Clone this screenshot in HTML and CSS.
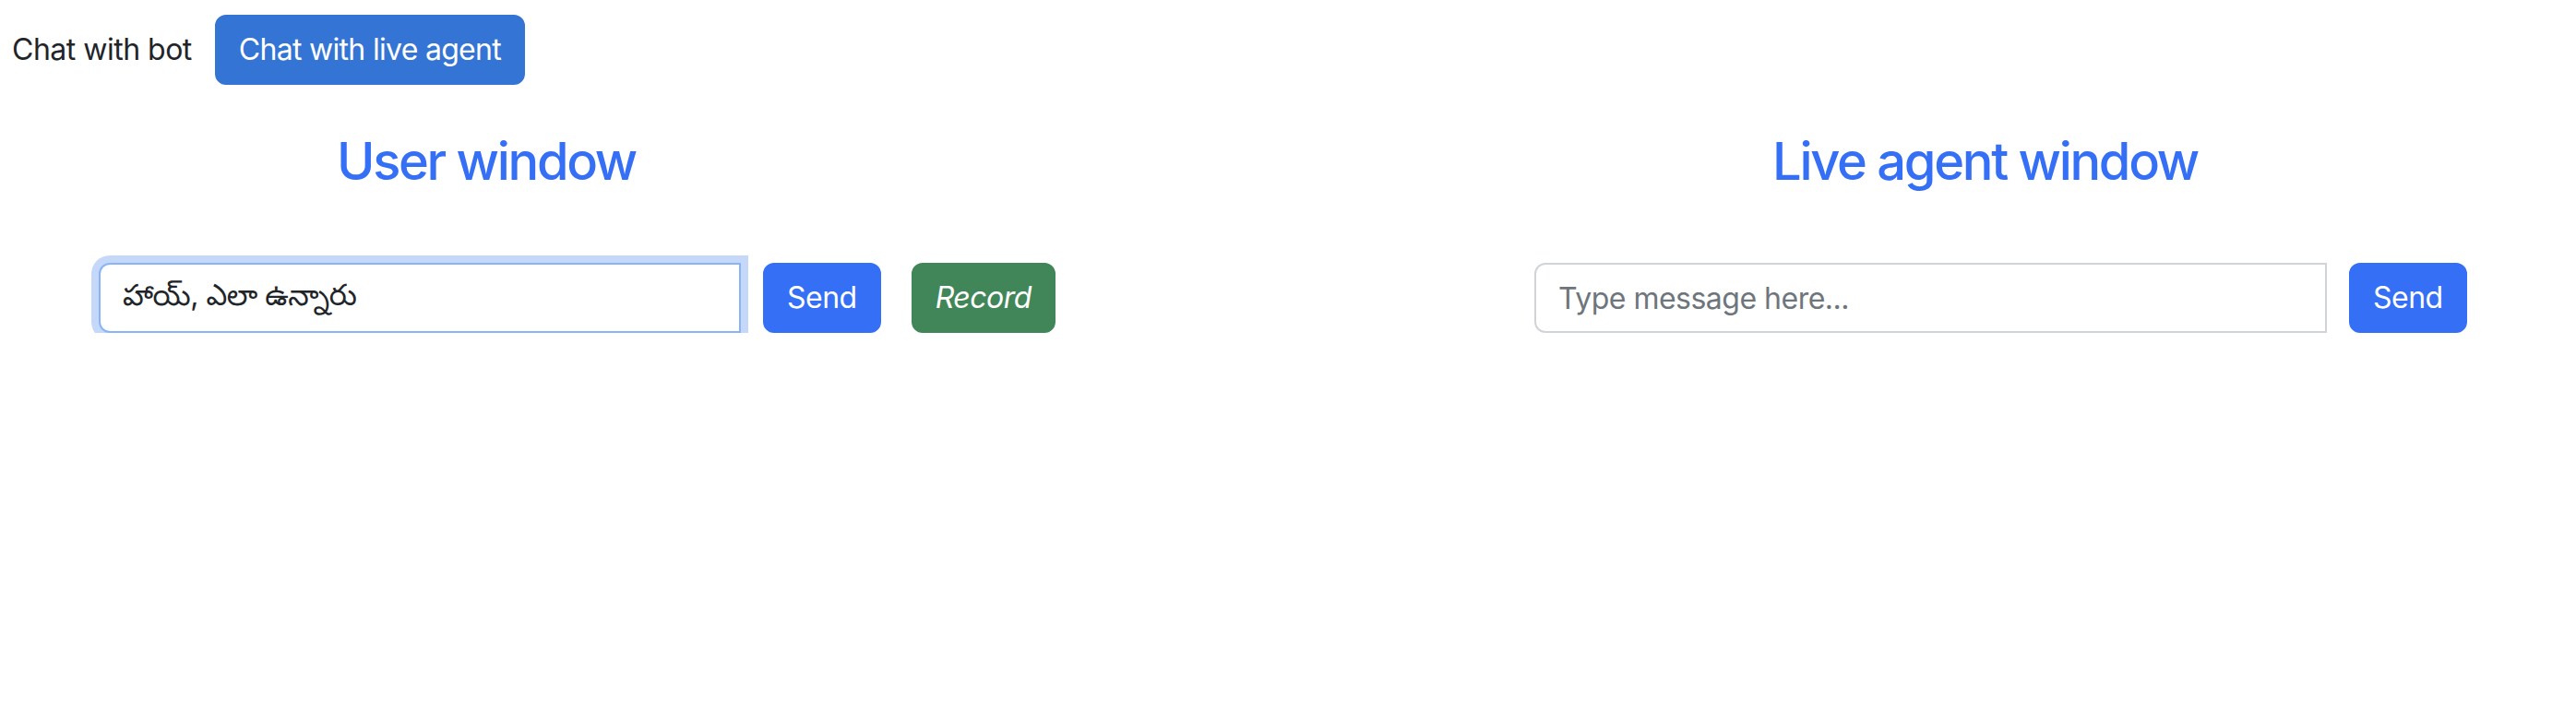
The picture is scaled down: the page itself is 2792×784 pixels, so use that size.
FILE: index.html
```html
<!DOCTYPE html>
<html lang="en">
<head>
    <meta charset="UTF-8">
    <meta name="viewport" content="width=device-width, initial-scale=1.0">
    <title>Chat</title>
    <link rel="stylesheet" href="styles.css">
</head>
<body>

    <div class="topbar">
        <span class="mode">Chat with bot</span>
        <button class="btn btn-agent" type="button">Chat with live agent</button>
    </div>

    <div class="panels">
        <section class="panel panel-user">
            <h3 class="title">User window</h3>
            <form class="send-form">
                <input class="field field-user focused" type="text" lang="te" value="హాయ్, ఎలా ఉన్నారు">
                <button class="btn btn-send" type="button">Send</button>
                <button class="btn btn-record" type="button"><i>Record</i></button>
            </form>
        </section>
        <section class="panel panel-agent">
            <h3 class="title">Live agent window</h3>
            <form class="send-form">
                <input class="field field-agent" type="text" placeholder="Type message here...">
                <button class="btn btn-send" type="button">Send</button>
            </form>
        </section>
    </div>

</body>
</html>
```

FILE: styles.css
```css
body {
    margin: 0;
    background: #fff;
    color: #212529;
    font-family: Inter, "Noto Sans", "Noto Sans Telugu", sans-serif;
    font-size: 32px;
    line-height: 1.5;
    letter-spacing: -0.5px;
}
.topbar {
    display: flex;
    align-items: center;
    gap: 25px;
    padding: 16px 12px 0 13px;
}
.mode {
    color: #212529;
}
.btn {
    flex-shrink: 0;
    font-family: inherit;
    font-size: 32px;
    line-height: 48px;
    letter-spacing: -0.5px;
    padding: 12px 24px;
    border: 2px solid transparent;
    border-radius: 12px;
    color: #fff;
    cursor: pointer;
}
.btn-agent {
    background-color: #3474d4;
    border-color: #3474d4;
    letter-spacing: -0.7px;
}
.btn-send {
    background-color: #346ff5;
    border-color: #346ff5;
}
.btn-record {
    background-color: #418658;
    border-color: #418658;
    margin-left: 9px;
}
.panels {
    display: flex;
    margin-top: 50px;
}
.panel {
    flex-shrink: 0;
}
.panel-user {
    width: 1054px;
}
.panel-agent {
    width: 1281px;
    margin-left: auto;
}
.title {
    margin: 0 0 76px;
    text-align: center;
    color: #346ff5;
    font-size: 56px;
    font-weight: 500;
    line-height: 67px;
    letter-spacing: -2.3px;
}
.send-form {
    display: flex;
    gap: 24px;
    white-space: nowrap;
}
.panel-user .send-form {
    padding-left: 107px;
}
.panel-agent .send-form {
    padding-left: 152px;
}
.field {
    flex-shrink: 0;
    box-sizing: border-box;
    height: 76px;
    padding: 12px 24px;
    font-family: inherit;
    font-size: 32px;
    letter-spacing: -0.5px;
    color: #212529;
    background: #fff;
    border: 2px solid #d0d4d9;
    border-radius: 12px 0 0 12px;
    outline: none;
}
.field::placeholder {
    color: #6e757c;
}
.field-user {
    width: 696px;
}
.field-agent {
    width: 859px;
}
.field.focused {
    border-color: #8ab4f8;
    box-shadow: 0 0 0 8px #c6d8fa;
}
```
